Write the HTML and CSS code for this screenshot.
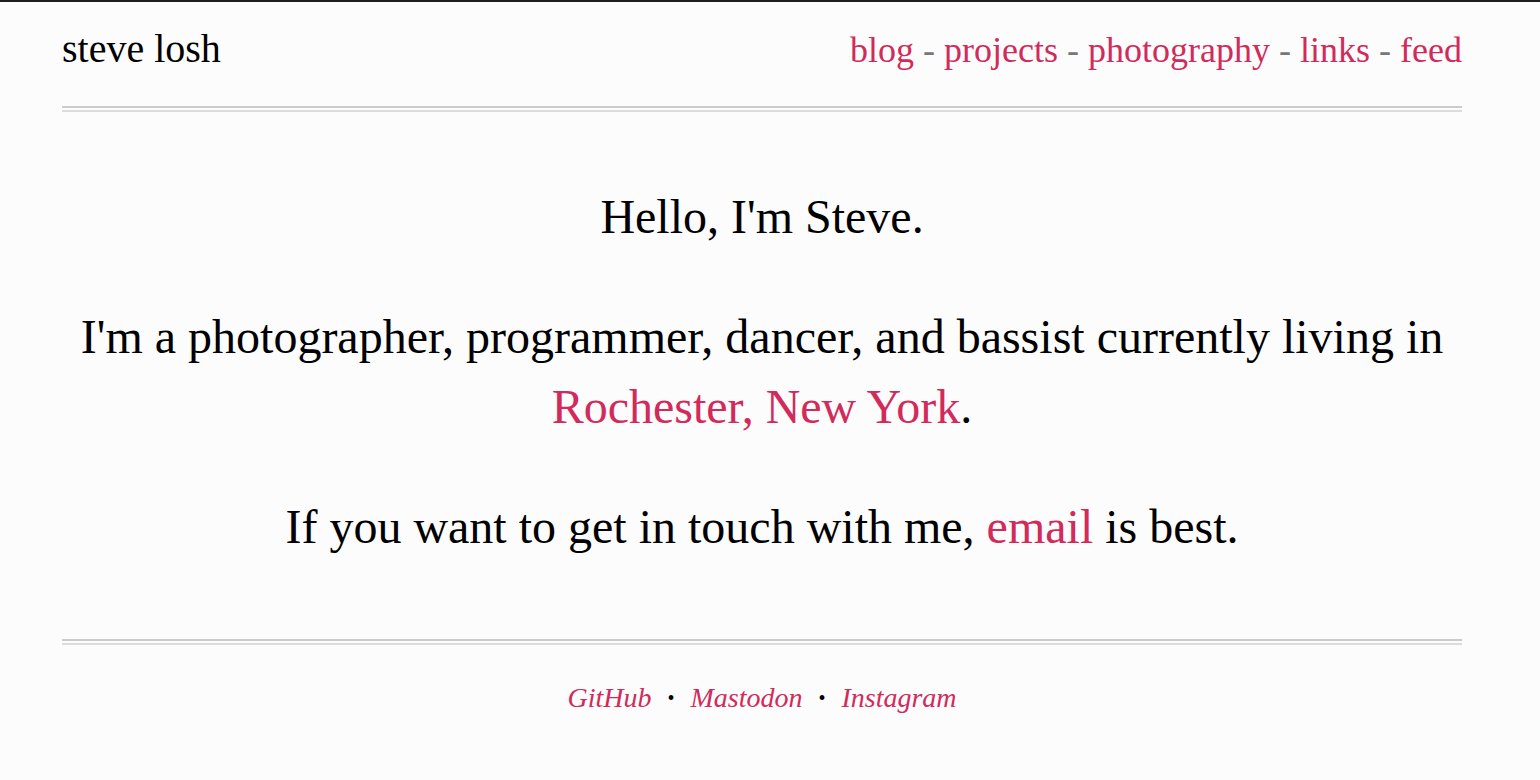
FILE: index.html
```html
<!DOCTYPE html>
<html lang="en">
<head>
<meta charset="utf-8">
<title>Steve Losh</title>
<link rel="stylesheet" href="styles.css">
</head>
<body>
<div class="page">
  <header class="masthead">
    <a class="site-title" href="#">steve losh</a>
    <nav class="site-nav">
      <a href="#">blog</a><span class="sep"> - </span><a href="#">projects</a><span class="sep"> - </span><a href="#">photography</a><span class="sep"> - </span><a href="#">links</a><span class="sep"> - </span><a href="#">feed</a>
    </nav>
  </header>
  <div class="rule"></div>
  <main class="content">
    <p>Hello, I'm Steve.</p>
    <p>I'm a photographer, programmer, dancer, and bassist currently living in <a href="#">Rochester, New York</a>.</p>
    <p>If you want to get in touch with me, <a href="#">email</a> is best.</p>
  </main>
  <div class="rule"></div>
  <footer class="footer">
    <a href="#">GitHub</a><span class="dot">•</span><a href="#">Mastodon</a><span class="dot">•</span><a href="#">Instagram</a>
  </footer>
</div>
</body>
</html>
```
FILE: styles.css
```css
html, body {
  margin: 0;
  padding: 0;
}
body {
  background: #fcfcfc;
  color: #000;
  font-family: "Liberation Serif", "Times New Roman", serif;
  border-top: 2px solid #1e1e1e;
  min-height: 778px;
}
a {
  color: #d22a5a;
  text-decoration: none;
}
.page {
  width: 1400px;
  margin-left: 62px;
}
.masthead {
  display: flex;
  justify-content: space-between;
  align-items: baseline;
  padding-top: 27px;
  height: 80px;
  box-sizing: border-box;
  line-height: 40px;
}
.site-title {
  color: #000;
  font-size: 40px;
}
.site-nav {
  font-size: 36px;
}
.sep {
  color: #777;
}
.rule {
  border-top: 2px solid #cbcbcb;
  border-bottom: 2px solid #dcdcdc;
  box-sizing: content-box;
  height: 2px;
  margin-top: 24px;
}
.content {
  text-align: center;
  font-size: 48px;
  line-height: 70px;
  padding: 70px 0 53px;
}
.content p {
  margin: 0 0 50px;
}
.content p:last-child {
  margin-bottom: 0;
}
.footer {
  text-align: center;
  font-style: italic;
  font-size: 28px;
  padding-top: 37px;
}
.dot {
  font-style: normal;
  font-size: 20px;
  color: #000;
  margin: 0 16px;
  vertical-align: 2px;
}
```
